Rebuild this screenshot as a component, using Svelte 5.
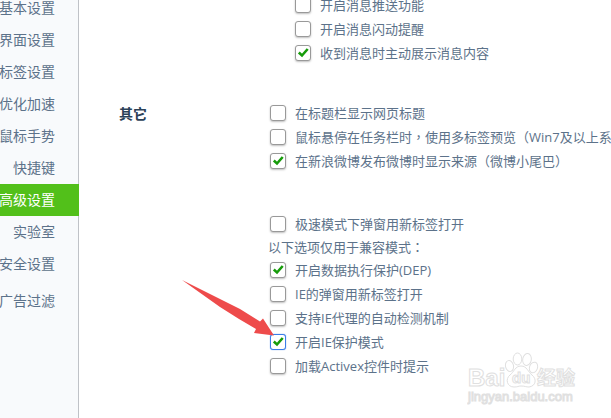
<script lang="ts">
  type Option = {
    label: string;
    checked: boolean;
    focused?: boolean;
  };

  const nav = ['基本设置', '界面设置', '标签设置', '优化加速', '鼠标手势', '快捷键', '高级设置', '实验室', '安全设置', '广告过滤'];
  let active = $state('高级设置');

  let messages: Option[] = $state([
    { label: '开启消息推送功能', checked: false },
    { label: '开启消息闪动提醒', checked: false },
    { label: '收到消息时主动展示消息内容', checked: true },
  ]);

  let others: Option[] = $state([
    { label: '在标题栏显示网页标题', checked: false },
    { label: '鼠标悬停在任务栏时，使用多标签预览（Win7及以上系统）', checked: false },
    { label: '在新浪微博发布微博时显示来源（微博小尾巴）', checked: true },
  ]);

  let popups: Option[] = $state([
    { label: '极速模式下弹窗用新标签打开', checked: false },
  ]);

  let compat: Option[] = $state([
    { label: '开启数据执行保护(DEP)', checked: true },
    { label: 'IE的弹窗用新标签打开', checked: false },
    { label: '支持IE代理的自动检测机制', checked: false },
    { label: '开启IE保护模式', checked: true, focused: true },
    { label: '加载Activex控件时提示', checked: false },
  ]);

  // full-width punctuation is set in its own centred face
  const pieces = (text: string) => text.split(/([，：（）])/);
</script>

{#snippet words(text: string)}
  {#each pieces(text) as piece}{#if /^[，：（）]$/.test(piece)}<span class="punct">{piece}</span>{:else}{piece}{/if}{/each}
{/snippet}

{#snippet list(options: Option[])}
  {#each options as option}
    <label class="option">
      <span class="box">
        <input type="checkbox" class:focused={option.focused} bind:checked={option.checked} />
        {#if option.checked}
          <svg class="tick" viewBox="0 0 16 16" aria-hidden="true">
            <path d="M3.800 7.500 L7 10.500 L12.700 4" />
          </svg>
        {/if}
      </span>
      <span>{@render words(option.label)}</span>
    </label>
  {/each}
{/snippet}

<div class="page">
  <nav class="sidebar">
    {#each nav as item}
      <button class="nav-item" class:active={item === active} class:last={item === '广告过滤'} onclick={() => (active = item)}>{item}</button>
    {/each}
  </nav>

  <main>
    <section class="messages">
      <div class="options indent">{@render list(messages)}</div>
    </section>

    <section class="others">
      <h2>其它</h2>
      <div class="options">
        {@render list(others)}
        <div class="gap"></div>
        {@render list(popups)}
        <p class="note">{@render words('以下选项仅用于兼容模式：')}</p>
        {@render list(compat)}
      </div>
    </section>
  </main>

  <svg class="arrow" viewBox="0 0 92 56" aria-hidden="true">
    <path d="M0 0 L38 19 L58 29 L78 41.500 L81 38.500 L92 55.500 L72 53 L74 49 L57 39 L38 27 Z" />
  </svg>

  <svg class="watermark" viewBox="0 0 112 56" aria-hidden="true">
    <text class="bai" x="1" y="34">Bai</text>
    <g class="paw">
      <ellipse cx="42.500" cy="14" rx="4" ry="5.500" transform="rotate(-12 42.500 14)" />
      <ellipse cx="50.500" cy="7" rx="4.300" ry="6" />
      <ellipse cx="60" cy="7.500" rx="4.300" ry="6" transform="rotate(10 60 7.500)" />
      <ellipse cx="66.500" cy="15.500" rx="4" ry="5.500" transform="rotate(20 66.500 15.500)" />
      <path d="M54 14 C48 14 47 20 43 23 C38 27 40 35 47 35 C51 35 51 34 54 34 C58 34 59 35 62 35 C69 34 70 27 65 23 C61 20 60 14 54 14 Z" />
    </g>
    <text class="du" x="45" y="31">du</text>
    <text class="jingyan" x="70" y="33">经验</text>
    <text class="site" x="1" y="49">jingyan.baidu.com</text>
  </svg>
</div>

<style>
  :global(body) { background: #fff; }

  .page { position: relative; display: flex; min-height: 100vh; overflow: hidden; font-family: "Open Sans", "Noto Sans CJK SC", sans-serif; color: #5c728a; }

  .sidebar { display: flex; flex-direction: column; flex: none; width: 78px; background: #f8fafc; border-right: 1px solid #bfc2c7; }
  .nav-item { display: flex; align-items: center; justify-content: flex-end; flex: none; height: 32px; margin: 0 -1px 0 0; padding: 0 24px 0 0; border: 0; background: none; font: inherit; font-size: 14px; line-height: 32px; white-space: nowrap; color: inherit; cursor: pointer; }
  .nav-item:first-child { margin-top: -8px; }
  .nav-item.active { background: #52c01a; color: #fff; }
  .nav-item.last { margin-top: 5px; }

  main { flex: 1; min-width: 0; padding-left: 40px; }
  section { display: flex; }
  .messages { margin-top: -7px; }
  .others { margin-top: 36px; }
  h2 { width: 149px; flex: none; margin: 0; font-size: 14px; line-height: 26px; font-weight: 700; color: #2b4158; }
  .options { flex: none; white-space: nowrap; font-size: 13px; }
  .options.indent { margin-left: 174px; }
  .gap { height: 39px; }
  .note { margin: 0; line-height: 22px; }

  .option { display: flex; align-items: center; gap: 9px; height: 24px; padding-left: 2px; line-height: 24px; cursor: pointer; }
  .box { position: relative; flex: none; width: 16px; height: 16px; }
  .box input { appearance: none; display: block; box-sizing: border-box; width: 16px; height: 16px; margin: 0; border: 1px solid #999; border-radius: 3px; background: #fff; box-shadow: 0 1px 2px rgba(0, 0, 0, .25); }
  .box input.focused { border-color: #3b7de8; box-shadow: 0 0 1px #3b7de8; }
  .tick { position: absolute; inset: 0; pointer-events: none; }
  .tick path { fill: none; stroke: #179c0b; stroke-width: 2.6; }
  .punct { font-family: "Noto Sans CJK TC", sans-serif; }

  .arrow { position: absolute; left: 182px; top: 280px; width: 92px; height: 56px; fill: #ee4b4b; pointer-events: none; }

  .watermark { position: absolute; right: 32px; top: 352px; width: 112px; height: 56px; fill: #fff; stroke: #e0e0e0; stroke-width: 1; pointer-events: none; }
  .watermark text { font-family: "Liberation Sans", "Noto Sans CJK SC", sans-serif; font-weight: 700; }
  .watermark .bai { font-size: 24px; }
  .watermark .du { font-size: 15px; }
  .watermark .jingyan { font-size: 19px; }
  .watermark .site { font-size: 13px; font-weight: 400; }
</style>
